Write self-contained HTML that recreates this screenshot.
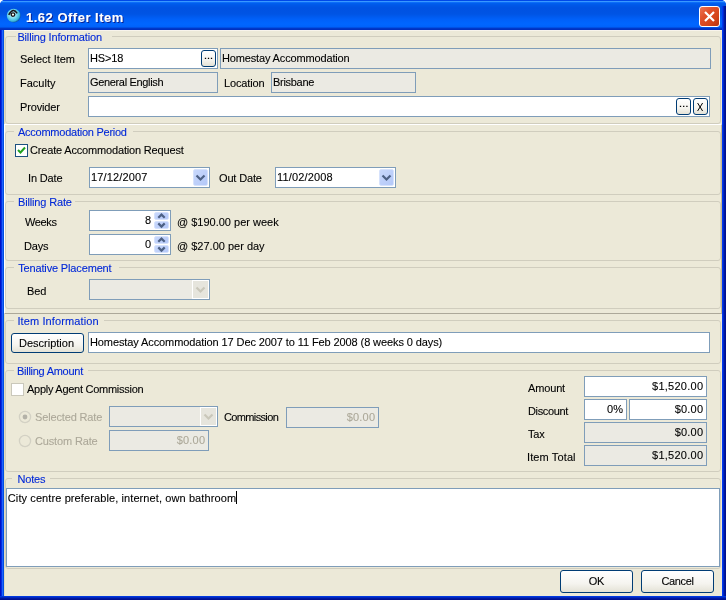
<!DOCTYPE html>
<html><head><meta charset="utf-8">
<style>
*{box-sizing:border-box;margin:0;padding:0}
html,body{width:726px;height:600px;overflow:hidden;background:#fff}
body{font-family:"Liberation Sans",sans-serif;font-size:11px;color:#000;position:relative;letter-spacing:-.15px}
.a{position:absolute}
.l,.tb,.btn,.gt,.ttl{will-change:transform;-webkit-text-stroke:.1px currentColor}
#win{position:absolute;left:0;top:0;width:726px;height:600px;border-radius:5px 5px 0 0;overflow:hidden;
 background:linear-gradient(to right,#0010a0 0,#0030d8 1px,#1a5cff 2px,#0050e0 3px,#0050e0 4px) left/4px 100% no-repeat,
 #0040e0}
#title{position:absolute;left:0;top:0;width:726px;height:30px;
 background:linear-gradient(to bottom,#0048e8 0px,#0048e8 1px,#3898ff 1px,#3898ff 2px,#0c6cf8 2px,#0c6cf8 3px,#0060f0 3px,#0058e8 5px,#0052e2 8px,#0054e4 14px,#0060f8 19px,#0066ff 24px,#0062fa 27px,#0040d0 28px,#0030c0 29px,#0030c0 30px)}
#rframe{position:absolute;left:722px;top:6px;width:4px;height:594px;background:linear-gradient(to right,#0040ff,#0030e0 1px,#0020b0 2px,#001090 3px)}
#lframe{position:absolute;left:0;top:30px;width:4px;height:570px;background:linear-gradient(to right,#0010c8 0,#0010c8 1px,#0030e0 1px,#0030e0 2px,#2060ff 2px,#2060ff 3px,#0050e0 3px)}
#bframe{position:absolute;left:0;top:596px;width:726px;height:4px;background:linear-gradient(to bottom,#0040f0,#0030d0 1px,#0020b0 2px,#001090 3px)}
#client{position:absolute;left:4px;top:30px;width:718px;height:566px;background:#ECE9D8;border-top:1px solid #F8F4EC;border-left:1px solid #E0DCC0;border-right:1px solid #F0E8D0;}
.ttl{position:absolute;left:26px;top:10px;color:#fff;font-weight:bold;font-size:13px;line-height:16px;letter-spacing:.5px;text-shadow:1px 1px 0 #0a1e8c}
.gb{position:absolute;border:1px solid #D0CDBE;border-radius:3px}
.gt{position:absolute;color:#0028D8;background:#ECE9D8;padding:0 4px 0 5px;line-height:13px;white-space:nowrap}
.l{position:absolute;line-height:13px;white-space:nowrap}
.tb{position:absolute;border:1px solid #7F9DB9;background:#fff;height:21px;line-height:19px;padding-left:1px;white-space:nowrap;overflow:hidden}
.dis{background:#EBEAE3}
.r{text-align:right;padding-right:3px;padding-left:0}
.btn{position:absolute;border:1px solid #003C74;border-radius:3px;background:linear-gradient(to bottom,#fff 0,#F5F4EF 60%,#E4E2D6 100%);text-align:center;white-space:nowrap}
.sb{position:absolute;border:1px solid #D6E2FC;border-radius:2px;background:linear-gradient(135deg,#C8D8FC,#B4C8F8)}
.gray{color:#ACA899}
</style></head><body>
<div id="win">
 <div id="title"></div>
 <div id="lframe"></div><div id="rframe"></div><div id="bframe"></div>
 <!-- icon -->
 <svg class="a" style="left:6px;top:8px" width="16" height="16" viewBox="0 0 16 16">
  <defs><radialGradient id="ig" cx="42%" cy="40%" r="62%"><stop offset="0" stop-color="#d8f8ff"/><stop offset=".45" stop-color="#80dcf0"/><stop offset=".8" stop-color="#3ab8dc"/><stop offset="1" stop-color="#0a4a98"/></radialGradient></defs>
  <circle cx="7.7" cy="7.7" r="6.9" fill="url(#ig)"/>
  <path d="M2.7 6.9 Q7.15 -1.2 11.2 5.4" stroke="#1a1418" stroke-width="1.5" fill="none"/>
  <circle cx="7" cy="6.6" r="1.8" fill="#f4fff8" stroke="#1a1418" stroke-width="1.3"/>
 </svg>
 <div class="ttl">1.62 Offer Item</div>
 <!-- close -->
 <div class="a" style="left:699px;top:6px;width:21px;height:21px;border:1px solid #fff;border-radius:3px;background:linear-gradient(135deg,#EC7454,#E0502A 35%,#D44418 70%,#B8340E)"></div>
 <svg class="a" style="left:699px;top:6px" width="21" height="21"><path d="M6 6 L15 15 M15 6 L6 15" stroke="#fff" stroke-width="2.2"/></svg>

 <div id="client"></div>

 <!-- Billing Information -->
 <div class="gb" style="left:5px;top:36px;width:716px;height:88px"></div>
 <div class="gt" style="left:16px;top:31px;width:96px;padding:0 0 0 1.4px">Billing Information</div>
 <div class="l" style="left:20px;top:53px;letter-spacing:0px">Select Item</div>
 <div class="tb" style="left:88px;top:48px;width:130px">HS&gt;18</div>
 <div class="btn" style="left:201px;top:50px;width:15px;height:17px"></div><svg class="a" style="left:201px;top:50px" width="15" height="17"><path d="M3.85 7.75h1.3v1.3h-1.3zM6.85 7.75h1.3v1.3h-1.3zM9.85 7.75h1.3v1.3h-1.3z" fill="#000"/></svg>
 <div class="tb dis" style="left:220px;top:48px;width:491px">Homestay Accommodation</div>
 <div class="l" style="left:20px;top:77px;letter-spacing:0px">Faculty</div>
 <div class="tb dis" style="left:88px;top:72px;width:130px;letter-spacing:-.34px">General English</div>
 <div class="l" style="left:224px;top:77px">Location</div>
 <div class="tb dis" style="left:271px;top:72px;width:145px;letter-spacing:-.3px">Brisbane</div>
 <div class="l" style="left:20px;top:101px">Provider</div>
 <div class="tb" style="left:88px;top:96px;width:622px"></div>
 <div class="btn" style="left:676px;top:98px;width:15px;height:17px"></div><svg class="a" style="left:676px;top:98px" width="15" height="17"><path d="M3.85 7.75h1.3v1.3h-1.3zM7.05 7.75h1.3v1.3h-1.3zM10.25 7.75h1.3v1.3h-1.3z" fill="#000"/></svg>
 <div class="btn" style="left:693px;top:98px;width:15px;height:17px"></div><svg class="a" style="left:693px;top:98px" width="15" height="17"><path d="M4.6 5 L9.6 13 M9.6 5 L4.6 13" stroke="#000" stroke-width="1" fill="none"/></svg>

 <!-- Accommodation Period -->
 <div class="gb" style="left:5px;top:131px;width:716px;height:64px"></div>
 <div class="gt" style="left:14px;top:126px;letter-spacing:-.25px;width:119px;padding:0 0 0 4.0px">Accommodation Period</div>
 <div class="a" style="left:15px;top:144px;width:13px;height:13px;border:1px solid #1C5180;background:#fff"></div>
 <svg class="a" style="left:15px;top:144px" width="13" height="13"><path d="M3 6 L5.5 8.5 L10 3.5" stroke="#21A121" stroke-width="2" fill="none"/></svg>
 <div class="l" style="left:30px;top:144px;letter-spacing:-.17px">Create Accommodation Request</div>
 <div class="l" style="left:28px;top:172px">In Date</div>
 <div class="tb" style="left:89px;top:167px;width:121px;letter-spacing:.15px">17/12/2007</div>
 <div class="sb" style="left:193px;top:169px;width:15px;height:17px"></div><svg class="a" style="left:193px;top:169px" width="15" height="17"><path d="M3.5 6.5 L7.5 10.5 L11.5 6.5" stroke="#4D6185" stroke-width="2.2" fill="none"/></svg>
 <div class="l" style="left:219px;top:172px">Out Date</div>
 <div class="tb" style="left:275px;top:167px;width:121px;letter-spacing:.15px">11/02/2008</div>
 <div class="sb" style="left:379px;top:169px;width:15px;height:17px"></div><svg class="a" style="left:379px;top:169px" width="15" height="17"><path d="M3.5 6.5 L7.5 10.5 L11.5 6.5" stroke="#4D6185" stroke-width="2.2" fill="none"/></svg>

 <!-- Billing Rate -->
 <div class="gb" style="left:5px;top:201px;width:716px;height:60px"></div>
 <div class="gt" style="left:14px;top:196px;width:61px;padding:0 0 0 4.0px">Billing Rate</div>
 <div class="l" style="left:25px;top:216px;letter-spacing:-.35px">Weeks</div>
 <div class="tb r" style="left:89px;top:210px;width:82px;padding-right:19px">8</div>
 <div class="sb" style="left:154px;top:212px;width:15px;height:8px"></div>
 <div class="sb" style="left:154px;top:221px;width:15px;height:8px"></div><svg class="a" style="left:154px;top:212px" width="15" height="8"><path d="M4.3 5.8 L7.5 2.6 L10.7 5.8" stroke="#4D6185" stroke-width="2.2" fill="none"/></svg><svg class="a" style="left:154px;top:221px" width="15" height="8"><path d="M4.3 2.4 L7.5 5.6 L10.7 2.4" stroke="#4D6185" stroke-width="2.2" fill="none"/></svg>
 <div class="l" style="left:177px;top:216px;letter-spacing:0px">@ $190.00 per week</div>
 <div class="l" style="left:24px;top:240px">Days</div>
 <div class="tb r" style="left:89px;top:234px;width:82px;padding-right:19px">0</div>
 <div class="sb" style="left:154px;top:236px;width:15px;height:8px"></div>
 <div class="sb" style="left:154px;top:245px;width:15px;height:8px"></div><svg class="a" style="left:154px;top:236px" width="15" height="8"><path d="M4.3 5.8 L7.5 2.6 L10.7 5.8" stroke="#4D6185" stroke-width="2.2" fill="none"/></svg><svg class="a" style="left:154px;top:245px" width="15" height="8"><path d="M4.3 2.4 L7.5 5.6 L10.7 2.4" stroke="#4D6185" stroke-width="2.2" fill="none"/></svg>
 <div class="l" style="left:177px;top:240px;letter-spacing:0px">@ $27.00 per day</div>

 <!-- Tenative Placement -->
 <div class="gb" style="left:5px;top:267px;width:716px;height:42px"></div>
 <div class="gt" style="left:14px;top:262px;width:105px;padding:0 0 0 4.2px">Tenative Placement</div>
 <div class="l" style="left:27px;top:285px">Bed</div>
 <div class="tb dis" style="left:89px;top:279px;width:121px"></div><div class="a" style="left:192px;top:280px;width:17px;height:19px;border:1px solid #fff;background:#E6E5DD"></div><svg class="a" style="left:193px;top:281px" width="15" height="17"><path d="M3.5 6.5 L7.5 10.5 L11.5 6.5" stroke="#C9C7BA" stroke-width="2.2" fill="none"/></svg>

 <div class="a" style="left:4px;top:124px;width:718px;height:190px;border-top:1px solid #fff;border-left:1px solid #fff;border-right:1px solid #C8B890;border-bottom:1px solid #ACA899"></div>
 <!-- splitter -->
 

 <!-- Item Information -->
 <div class="gb" style="left:5px;top:320px;width:716px;height:44px"></div>
 <div class="gt" style="left:14px;top:315px;letter-spacing:.12px;width:90px;padding:0 0 0 3.4px">Item Information</div>
 <div class="btn" style="left:11px;top:333px;width:73px;height:20px;line-height:18px;letter-spacing:0px;text-indent:-2px">Description</div>
 <div class="tb" style="left:88px;top:332px;width:622px;letter-spacing:-.1px">Homestay Accommodation 17 Dec 2007 to 11 Feb 2008 (8 weeks 0 days)</div>

 <!-- Billing Amount -->
 <div class="gb" style="left:5px;top:370px;width:716px;height:102px"></div>
 <div class="gt" style="left:14px;top:365px;letter-spacing:-.27px;width:74px;padding:0 0 0 3.0px">Billing Amount</div>
 <div class="a" style="left:11px;top:383px;width:13px;height:13px;border:1px solid #CAC8BB;background:#fff"></div>
 <div class="l" style="left:26.5px;top:383px;letter-spacing:-.27px">Apply Agent Commission</div>
 <svg class="a" style="left:18px;top:410px" width="14" height="14"><circle cx="7" cy="7" r="5.6" fill="#ECE9D8" stroke="#D3D1C4" stroke-width="1.3"/><circle cx="7" cy="7" r="2.4" fill="#B4B2A8"/></svg><div class="l gray" style="left:35px;top:411px">Selected Rate</div>
 <svg class="a" style="left:18px;top:434px" width="14" height="14"><circle cx="7" cy="7" r="5.6" fill="#ECE9D8" stroke="#D3D1C4" stroke-width="1.3"/></svg><div class="l gray" style="left:35px;top:435px">Custom Rate</div>
 <div class="tb dis" style="left:109px;top:406px;width:109px"></div><div class="a" style="left:200px;top:407px;width:17px;height:19px;border:1px solid #fff;background:#E6E5DD"></div><svg class="a" style="left:201px;top:408px" width="15" height="17"><path d="M3.5 6.5 L7.5 10.5 L11.5 6.5" stroke="#C9C7BA" stroke-width="2.2" fill="none"/></svg>
 <div class="l" style="left:223.5px;top:411px;letter-spacing:-.64px">Commission</div>
 <div class="tb dis r gray" style="left:286px;top:407px;width:93px;letter-spacing:.2px;padding-right:2.8px">$0.00</div>
 <div class="tb dis r gray" style="left:109px;top:430px;width:100px;letter-spacing:.2px;padding-right:2.8px">$0.00</div>
 <div class="l" style="left:527.5px;top:382px">Amount</div>
 <div class="tb r" style="left:584px;top:376px;width:123px;letter-spacing:.25px;padding-right:2.75px">$1,520.00</div>
 <div class="l" style="left:527.5px;top:405px;letter-spacing:-.35px">Discount</div>
 <div class="tb r" style="left:584px;top:399px;width:43px;letter-spacing:.2px;padding-right:2.75px">0%</div>
 <div class="tb r" style="left:629px;top:399px;width:78px;letter-spacing:.2px;padding-right:2.8px">$0.00</div>
 <div class="l" style="left:527.5px;top:428px">Tax</div>
 <div class="tb dis r" style="left:584px;top:422px;width:123px;letter-spacing:.2px;padding-right:2.8px">$0.00</div>
 <div class="l" style="left:527px;top:451px;letter-spacing:.12px">Item Total</div>
 <div class="tb dis r" style="left:584px;top:445px;width:123px;letter-spacing:.25px;padding-right:2.75px">$1,520.00</div>

 <!-- Notes -->
 <div class="gb" style="left:5px;top:478px;width:716px;height:91px"></div>
 <div class="gt" style="left:12px;top:473px;width:38px;padding:0 0 0 5.4px">Notes</div>
 <div class="tb" style="left:6px;top:488px;width:714px;height:79px;line-height:13px;padding-top:2.5px;padding-left:.8px;letter-spacing:.1px">City centre preferable, internet, own bathroom</div>

 <div class="a" style="left:236px;top:491px;width:1px;height:13px;background:#000"></div>
 <div class="btn" style="left:560px;top:570px;width:73px;height:23px;line-height:21px">OK</div>
 <div class="btn" style="left:641px;top:570px;width:73px;height:23px;line-height:21px;letter-spacing:-.35px">Cancel</div>
</div>
</body></html>
